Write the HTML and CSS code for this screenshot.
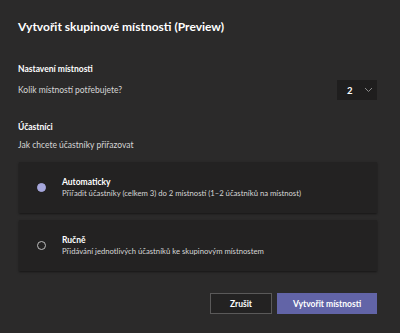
FILE: index.html
```html
<!DOCTYPE html>
<html>
<head>
    <title>Vytvořit skupinové místnosti</title>
    <link rel="stylesheet" href="styles.css">
</head>
<body>
    <div class="dialog">
        <h2 class="title">Vytvořit skupinové místnosti (Preview)</h2>

        <div class="section">
            <div class="section-label">Nastavení místnosti</div>
            <div class="row">
                <span class="muted">Kolik místností potřebujete?</span>
                <div class="select">
                    <span>2</span>
                    <svg width="9" height="6" viewBox="0 0 9 6"><path d="M1 1l3.5 3.5L8 1" fill="none" stroke="#8a8a8a" stroke-width="1"/></svg>
                </div>
            </div>
        </div>

        <div class="section second">
            <div class="section-label">Účastníci</div>
            <div class="muted">Jak chcete účastníky přiřazovat</div>
        </div>

        <div class="options">
            <div class="option">
                <span class="radio checked"></span>
                <div>
                    <div class="option-title">Automaticky</div>
                    <div class="option-desc">Přiřadit účastníky (celkem 3) do 2 místností (1–2 účastníků na místnost)</div>
                </div>
            </div>
            <div class="option">
                <span class="radio"></span>
                <div>
                    <div class="option-title">Ručně</div>
                    <div class="option-desc">Přidávání jednotlivých účastníků ke skupinovým místnostem</div>
                </div>
            </div>
        </div>

        <div class="actions">
            <button class="btn">Zrušit</button>
            <button class="btn primary">Vytvořit místnosti</button>
        </div>
    </div>
</body>
</html>
```

FILE: styles.css
```css
body {
    margin: 0;
    background: #2b2a2a;
    font-family: Lato, "Noto Sans", sans-serif;
    color: #ffffff;
}
.dialog {
    width: 400px;
    height: 333px;
    box-sizing: border-box;
    padding: 19px 23px 0 18px;
}
.title {
    margin: 0 0 28px;
    font-size: 12px;
    font-weight: 700;
    line-height: 16px;
}
.section-label {
    font-size: 8.5px;
    font-weight: 700;
    line-height: 12px;
    margin-bottom: 5px;
}
.section.second {
    margin-top: 21px;
}
.section.second .section-label {
    margin-bottom: 6px;
}
.row {
    display: flex;
    align-items: center;
    justify-content: space-between;
}
.muted {
    font-size: 8.5px;
    color: #d6d6d6;
    line-height: 12px;
}
.select {
    width: 40px;
    height: 20px;
    background: #1f1e1e;
    display: flex;
    align-items: center;
    gap: 11px;
    padding-left: 10px;
    box-sizing: border-box;
    font-size: 9.5px;
    font-weight: 700;
}
.options {
    display: flex;
    flex-direction: column;
    gap: 7px;
    margin: 11px 0 0 1px;
}
.option {
    height: 51px;
    background: #232222;
    box-shadow: 0 1px 2px rgba(0, 0, 0, 0.5);
    display: flex;
    align-items: center;
    gap: 16px;
    padding-left: 18px;
}
.radio {
    width: 7px;
    height: 7px;
    border-radius: 50%;
    border: 1px solid #bdbdbd;
    flex: none;
}
.radio.checked {
    border-color: #a6a7dc;
    background: #a6a7dc;
}
.option-title {
    font-size: 8.5px;
    font-weight: 700;
    line-height: 11px;
}
.option-desc {
    font-size: 7.7px;
    color: #d6d6d6;
    line-height: 10px;
}
.actions {
    display: flex;
    justify-content: flex-end;
    gap: 5px;
    margin-top: 22px;
}
.btn {
    width: 62px;
    height: 21px;
    padding: 0;
    background: #232222;
    border: 1px solid #5a5959;
    color: #ffffff;
    font-family: inherit;
    font-size: 8.5px;
    font-weight: 700;
}
.btn.primary {
    width: 100px;
    background: #6264a7;
    border-color: #6264a7;
}
```
